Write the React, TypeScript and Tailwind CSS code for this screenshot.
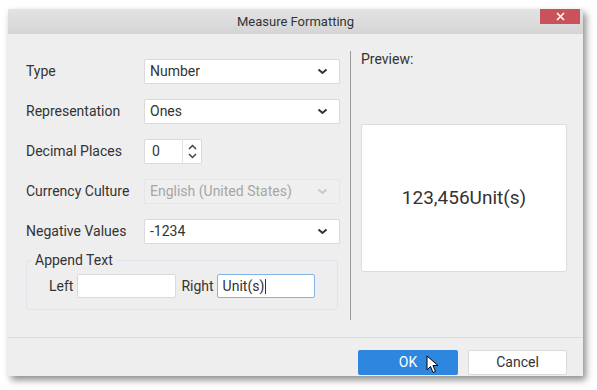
const font = { fontFamily: "Roboto, 'Liberation Sans', sans-serif" };

function Chevron({ color = "#333" }: { color?: string }) {
  return (
    <svg width="11" height="7" viewBox="0 0 11 7">
      <path d="M1.5 1.5 L5.5 5 L9.5 1.5" fill="none" stroke={color} strokeWidth="2" />
    </svg>
  );
}

function Select({ value, disabled }: { value: string; disabled?: boolean }) {
  return (
    <div
      className={`flex h-[25px] w-[196px] items-center justify-between rounded-[2px] border pl-[5px] pr-[11px] text-[14px] ${
        disabled ? "border-[#e6e6e6] bg-[#efefef] text-[#a6a6a6]" : "border-[#dadada] bg-white text-[#333]"
      }`}
    >
      <span>{value}</span>
      <Chevron color={disabled ? "#c8c8c8" : "#333"} />
    </div>
  );
}

function Row({ label, children }: { label: string; children: React.ReactNode }) {
  return (
    <div className="flex h-[25px] items-center">
      <span className="w-[118px] text-[14px] text-[#333]">{label}</span>
      {children}
    </div>
  );
}

export default function App() {
  return (
    <div className="h-[390px] w-[597px] overflow-hidden bg-white pl-[8px] pt-[9px]" style={font}>
      <div className="flex h-[367px] w-[575px] flex-col bg-[#eeeeee] shadow-[3px_4px_7px_rgba(0,0,0,0.45)]">
        {/* title bar */}
        <div className="relative flex h-[25px] items-center justify-center bg-gradient-to-b from-[#e3e3e3] to-[#d5d5d5]">
          <span className="text-[13px] text-[#333]">Measure Formatting</span>
          <div className="absolute right-[3px] top-0 flex h-[15px] w-[40px] items-center justify-center bg-[#c9535a]">
            <svg width="9" height="9" viewBox="0 0 9 9">
              <path d="M1 1 L8 8 M8 1 L1 8" stroke="#fff" strokeWidth="1.6" />
            </svg>
          </div>
        </div>

        {/* body */}
        <div className="flex h-[303px]">
          <div className="flex w-[332px] flex-col gap-[15px] pl-[18px] pt-[25px]">
            <Row label="Type">
              <Select value="Number" />
            </Row>
            <Row label="Representation">
              <Select value="Ones" />
            </Row>
            <Row label="Decimal Places">
              <div className="flex h-[25px] w-[58px] items-center rounded-[2px] border border-[#dadada] bg-white text-[14px] text-[#333]">
                <span className="flex-1 pl-[7px]">0</span>
                <div className="flex h-full w-[19px] flex-col items-center justify-center gap-[3px] border-l border-[#e2e2e2]">
                  <svg width="9" height="6" viewBox="0 0 9 6">
                    <path d="M1 5 L4.5 1.5 L8 5" fill="none" stroke="#444" strokeWidth="1.5" />
                  </svg>
                  <svg width="9" height="6" viewBox="0 0 9 6">
                    <path d="M1 1 L4.5 4.5 L8 1" fill="none" stroke="#444" strokeWidth="1.5" />
                  </svg>
                </div>
              </div>
            </Row>
            <Row label="Currency Culture">
              <Select value="English (United States)" disabled />
            </Row>
            <Row label="Negative Values">
              <Select value="-1234" />
            </Row>
            <fieldset className="-mt-[7px] ml-0 mr-[2px] h-[58px] rounded-[3px] border border-[#dfe5ec] px-[22px] pb-0 pt-0">
              <legend className="ml-[-18px] px-[4px] text-[14px] leading-[16px] text-[#333]">Append Text</legend>
              <div className="mt-[6px] flex items-center text-[14px] text-[#333]">
                <span className="mr-[4px]">Left</span>
                <div className="h-[24px] w-[99px] rounded-[2px] border border-[#dadada] bg-white" />
                <span className="ml-[5px] mr-[3px]">Right</span>
                <div className="flex h-[24px] w-[98px] items-center rounded-[2px] border border-[#82b4e6] bg-white pl-[5px]">
                  Unit(s)
                  <span className="ml-[1px] h-[15px] w-px bg-[#333]" />
                </div>
              </div>
            </fieldset>
          </div>
          <div className="ml-[10px] mt-[17px] h-[269px] w-px bg-[#9a9a9a]" />
          <div className="ml-[10px] flex w-[206px] flex-col pt-[17px]">
            <span className="text-[14px] leading-[17px] text-[#333]">Preview:</span>
            <div className="mt-[56px] flex h-[148px] items-center justify-center rounded-[2px] border border-[#dcdcdc] bg-white">
              <span className="text-[19px] text-[#333]">123,456Unit(s)</span>
            </div>
          </div>
        </div>

        {/* footer */}
        <div className="flex flex-1 justify-end gap-[10px] border-t border-[#dcdcdc] pr-[16px] pt-[12px]">
          <div className="relative flex h-[25px] w-[100px] items-center justify-center rounded-[2px] bg-[#2e86df] text-[14px] text-white">
            OK
            <svg className="absolute left-[68px] top-[5px]" width="13" height="19" viewBox="0 0 13 19">
              <path d="M1 1 L1 15 L4.5 11.5 L7 17.5 L9.5 16.5 L7 10.5 L12 10.5 Z" fill="#fff" stroke="#000" strokeWidth="1" strokeLinejoin="round" />
            </svg>
          </div>
          <div className="flex h-[25px] w-[99px] items-center justify-center rounded-[2px] border border-[#dadada] bg-white text-[14px] text-[#333]">
            Cancel
          </div>
        </div>
      </div>
    </div>
  );
}
